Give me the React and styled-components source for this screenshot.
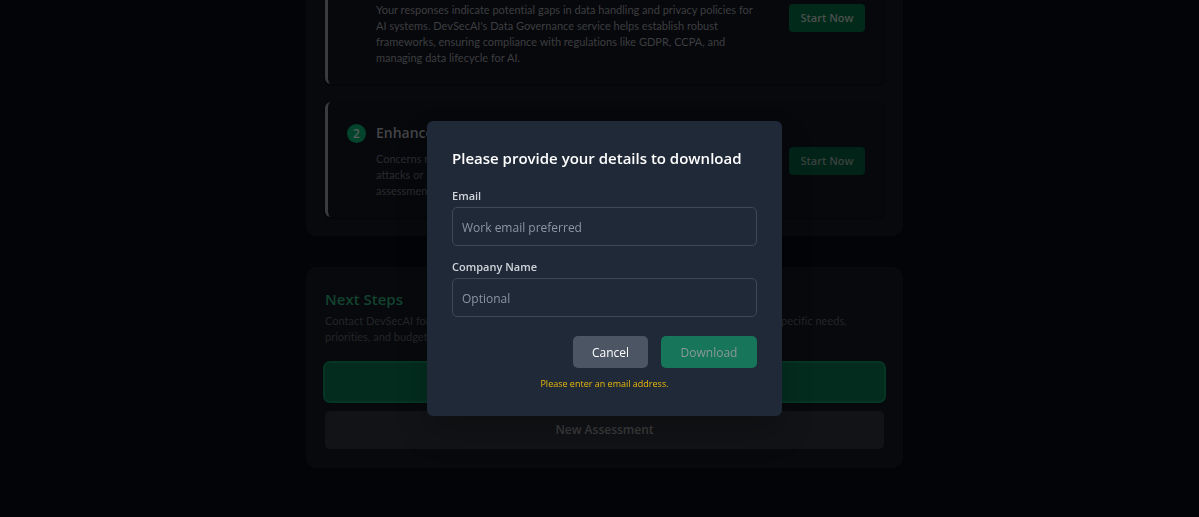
import React from 'react';
import styled, { createGlobalStyle } from 'styled-components';

const GlobalStyle = createGlobalStyle`
  *, *::before, *::after { box-sizing: border-box; }
  body {
    margin: 0;
    background: #020408;
    font-family: "Open Sans", "Noto Sans", sans-serif;
    font-size: 12px;
    line-height: 16px;
  }
  h2, h3, p { margin: 0; }
  button, input { font: inherit; }
`;

const Page = styled.main`
  min-height: 100vh;
  padding: 0 16px 48px 26px;
`;

const Column = styled.div`
  display: flex;
  flex-direction: column;
  gap: 31px;
  max-width: 597px;
  margin: 0 auto;
`;

const Card = styled.section`
  padding: ${(p) => (p.$continued ? '0 19px 19px' : '19px')};
  border-radius: ${(p) => (p.$continued ? '0 0 10px 10px' : '10px')};
  background: #08090c;
`;

const Items = styled.ol`
  display: flex;
  flex-direction: column;
  gap: 18px;
  margin: 0;
  padding: 0;
  list-style: none;
`;

const Item = styled.li`
  display: flex;
  align-items: ${(p) => (p.$continued ? 'flex-start' : 'center')};
  justify-content: space-between;
  gap: 20px;
  padding: ${(p) => (p.$continued ? '2px 19px 18px' : '20px 19px 18px')};
  border-left: 3px solid #3a3b3d;
  border-radius: ${(p) => (p.$continued ? '0 0 6px 6px' : '6px')};
  background: #07080c;
  box-shadow: 0 1px 2px #050609;
`;

const ItemBody = styled.div`
  display: grid;
  grid-template-columns: 19px 1fr;
  column-gap: 10px;
  row-gap: 7px;
  align-items: center;
`;

const Badge = styled.span`
  height: 19px;
  border-radius: 50%;
  background: #04432c;
  color: #56605c;
  font-weight: 600;
  line-height: 19px;
  text-align: center;
`;

const ItemTitle = styled.h3`
  color: #444548;
  font-size: 14px;
  font-weight: 600;
  line-height: 22px;
`;

const BodyText = styled.p`
  color: ${(p) => (p.$dim ? '#2a2b2e' : '#3d3e40')};
  font-family: Lato, "Open Sans", sans-serif;
  font-size: 11px;
  font-variant-ligatures: none;
  white-space: pre-line;
`;

const ItemText = styled(BodyText)`
  grid-column: 2;
`;

const StartButton = styled.button`
  flex: none;
  width: 76px;
  height: 28px;
  margin-top: ${(p) => (p.$top ? '2px' : '0')};
  padding: 0;
  border: 0;
  border-radius: 4px;
  background: ${(p) => (p.$top ? '#022a1b' : '#022418')};
  color: ${(p) => (p.$top ? '#4b504e' : '#3b413e')};
  font-size: 11px;
  font-weight: 600;
`;

const NextTitle = styled.h2`
  padding-top: 1px;
  color: #12432f;
  font-size: 15px;
  font-weight: 600;
  line-height: 24px;
`;

const NextText = styled(BodyText)`
  padding: 2px 0 18px;
  color: #242528;
`;

const WideButton = styled.button`
  display: block;
  width: 100%;
  height: 38px;
  border: 0;
  border-radius: 5px;
  background: ${(p) => (p.$primary ? '#032c1e' : '#121316')};
  box-shadow: ${(p) => (p.$primary ? '0 0 0 2px #053523' : 'none')};
  color: #3b3b3d;
  font-weight: 600;

  & + & { margin-top: 10px; }
`;

const Overlay = styled.div`
  position: fixed;
  inset: 0;
  display: flex;
  align-items: center;
  justify-content: center;
  padding: 20px 0 0 10px;
`;

const Dialog = styled.form`
  width: 100%;
  max-width: 355px;
  padding: 25px;
  border-radius: 6px;
  background: #1f2937;
  box-shadow: 0 16px 32px rgba(0, 0, 0, 0.2);
`;

const DialogTitle = styled.h2`
  margin-bottom: 17px;
  color: #fff;
  font-size: 15px;
  font-weight: 600;
  line-height: 25px;
`;

const Field = styled.div`
  display: flex;
  flex-direction: column;
  gap: 3px;
  margin-bottom: 13px;
`;

const Label = styled.label`
  color: #d1d5db;
  font-size: 11px;
  font-weight: 600;
`;

const Input = styled.input`
  width: 100%;
  height: 39px;
  padding: 1px 9px 0;
  border: 1px solid #3e4857;
  border-radius: 5px;
  outline: 0;
  background: #1f2937;
  color: #fff;

  &::placeholder { color: #8d95a2; opacity: 1; }
`;

const Actions = styled.div`
  display: flex;
  justify-content: flex-end;
  gap: 13px;
  padding-top: 6px;
`;

const ActionButton = styled.button`
  width: ${(p) => (p.$primary ? '96px' : '75px')};
  height: 32px;
  padding: 1px 0 0;
  border: 0;
  border-radius: 5px;
  background: ${(p) => (p.$primary ? '#177559' : '#4b5563')};
  color: ${(p) => (p.$primary ? '#8b9995' : '#fff')};
  font-weight: 500;
`;

const Message = styled.p`
  margin-top: 9px;
  color: #eab90c;
  font-size: 9px;
  font-weight: 500;
  line-height: 14px;
  text-align: center;
`;

export default function App() {
  return (
    <>
      <GlobalStyle />
      <Page>
        <Column>
          <Card $continued>
            <Items>
              <Item $continued>
                <ItemBody>
                  <ItemText>
                    {`Your responses indicate potential gaps in data handling and privacy policies for
                    AI systems. DevSecAI's Data Governance service helps establish robust
                    frameworks, ensuring compliance with regulations like GDPR, CCPA, and
                    managing data lifecycle for AI.`}
                  </ItemText>
                </ItemBody>
                <StartButton type="button" $top>Start Now</StartButton>
              </Item>
              <Item>
                <ItemBody>
                  <Badge>2</Badge>
                  <ItemTitle>Enhance</ItemTitle>
                  <ItemText $dim>
                    {`Concerns r
                    attacks or
                    assessment`}
                  </ItemText>
                </ItemBody>
                <StartButton type="button">Start Now</StartButton>
              </Item>
            </Items>
          </Card>
          <Card>
            <NextTitle>Next Steps</NextTitle>
            <NextText>
              {`Contact DevSecAI for any more detailed discussion of these results and of your organization's specific needs,
              priorities, and budget.`}
            </NextText>
            <WideButton type="button" $primary aria-label="Contact DevSecAI" />
            <WideButton type="button">New Assessment</WideButton>
          </Card>
        </Column>
      </Page>
      <Overlay>
        <Dialog role="dialog" aria-modal="true" aria-labelledby="dialog-title" noValidate>
          <DialogTitle id="dialog-title">Please provide your details to download</DialogTitle>
          <Field>
            <Label htmlFor="email">Email</Label>
            <Input id="email" type="email" placeholder="Work email preferred" />
          </Field>
          <Field>
            <Label htmlFor="company">Company Name</Label>
            <Input id="company" type="text" placeholder="Optional" />
          </Field>
          <Actions>
            <ActionButton type="button">Cancel</ActionButton>
            <ActionButton type="submit" $primary disabled>Download</ActionButton>
          </Actions>
          <Message role="alert">Please enter an email address.</Message>
        </Dialog>
      </Overlay>
    </>
  );
}
